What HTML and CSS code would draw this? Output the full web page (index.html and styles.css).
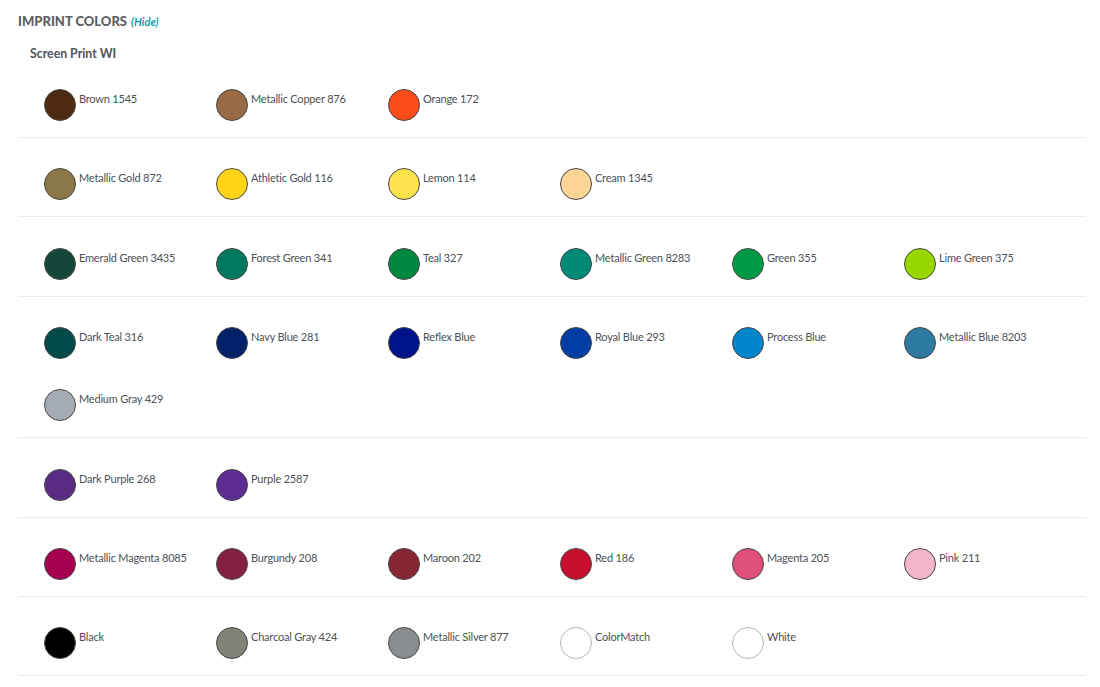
FILE: index.html
```html
<!DOCTYPE html>
<html lang="en">
<head>
<meta charset="utf-8">
<title>Imprint Colors</title>
<link rel="stylesheet" href="styles.css">
</head>
<body>
<section class="imprint">
  <h2 class="title">IMPRINT COLORS <a class="hide" href="#">(Hide)</a></h2>
  <h3 class="method">Screen Print WI</h3>

  <div class="row">
    <div class="swatch"><span class="dot" style="background:#4e2a10"></span><span class="label">Brown 1545</span></div>
    <div class="swatch"><span class="dot" style="background:#9a6a45"></span><span class="label">Metallic Copper 876</span></div>
    <div class="swatch"><span class="dot" style="background:#fc4c1c"></span><span class="label">Orange 172</span></div>
  </div>

  <div class="row">
    <div class="swatch"><span class="dot" style="background:#8c7749"></span><span class="label">Metallic Gold 872</span></div>
    <div class="swatch"><span class="dot" style="background:#ffd416"></span><span class="label">Athletic Gold 116</span></div>
    <div class="swatch"><span class="dot" style="background:#fce34c"></span><span class="label">Lemon 114</span></div>
    <div class="swatch"><span class="dot" style="background:#fdd596"></span><span class="label">Cream 1345</span></div>
  </div>

  <div class="row">
    <div class="swatch"><span class="dot" style="background:#15463a"></span><span class="label">Emerald Green 3435</span></div>
    <div class="swatch"><span class="dot" style="background:#007a5e"></span><span class="label">Forest Green 341</span></div>
    <div class="swatch"><span class="dot" style="background:#00873f"></span><span class="label">Teal 327</span></div>
    <div class="swatch"><span class="dot" style="background:#008a74"></span><span class="label">Metallic Green 8283</span></div>
    <div class="swatch"><span class="dot" style="background:#009a44"></span><span class="label">Green 355</span></div>
    <div class="swatch"><span class="dot" style="background:#97d700"></span><span class="label">Lime Green 375</span></div>
  </div>

  <div class="row">
    <div class="swatch"><span class="dot" style="background:#034b4a"></span><span class="label">Dark Teal 316</span></div>
    <div class="swatch"><span class="dot" style="background:#012169"></span><span class="label">Navy Blue 281</span></div>
    <div class="swatch"><span class="dot" style="background:#001489"></span><span class="label">Reflex Blue</span></div>
    <div class="swatch"><span class="dot" style="background:#003da5"></span><span class="label">Royal Blue 293</span></div>
    <div class="swatch"><span class="dot" style="background:#0085ca"></span><span class="label">Process Blue</span></div>
    <div class="swatch"><span class="dot" style="background:#2e79a0"></span><span class="label">Metallic Blue 8203</span></div>
    <div class="swatch"><span class="dot" style="background:#a5acb3"></span><span class="label">Medium Gray 429</span></div>
  </div>

  <div class="row">
    <div class="swatch"><span class="dot" style="background:#582c83"></span><span class="label">Dark Purple 268</span></div>
    <div class="swatch"><span class="dot" style="background:#5c2d93"></span><span class="label">Purple 2587</span></div>
  </div>

  <div class="row">
    <div class="swatch"><span class="dot" style="background:#a50050"></span><span class="label">Metallic Magenta 8085</span></div>
    <div class="swatch"><span class="dot" style="background:#862041"></span><span class="label">Burgundy 208</span></div>
    <div class="swatch"><span class="dot" style="background:#862633"></span><span class="label">Maroon 202</span></div>
    <div class="swatch"><span class="dot" style="background:#c8102e"></span><span class="label">Red 186</span></div>
    <div class="swatch"><span class="dot" style="background:#e04e7b"></span><span class="label">Magenta 205</span></div>
    <div class="swatch"><span class="dot" style="background:#f5b6cd"></span><span class="label">Pink 211</span></div>
  </div>

  <div class="row">
    <div class="swatch"><span class="dot" style="background:#000000"></span><span class="label">Black</span></div>
    <div class="swatch"><span class="dot" style="background:#828279"></span><span class="label">Charcoal Gray 424</span></div>
    <div class="swatch"><span class="dot" style="background:#8a8d8f"></span><span class="label">Metallic Silver 877</span></div>
    <div class="swatch"><span class="dot dot-light" style="background:#ffffff"></span><span class="label">ColorMatch</span></div>
    <div class="swatch"><span class="dot dot-light" style="background:#ffffff"></span><span class="label">White</span></div>
  </div>
</section>
</body>
</html>
```

FILE: styles.css
```css
html, body {
  margin: 0;
  padding: 0;
  background: #ffffff;
}

body {
  font-family: Lato, "Liberation Sans", sans-serif;
  color: #4b5158;
}

.imprint {
  width: 1068px;
  padding: 12px 0 0 18px;
}

.title {
  margin: 0;
  font-size: 13px;
  line-height: 18px;
  font-weight: 900;
  color: #5a5f66;
}

.hide {
  font-size: 11px;
  font-style: italic;
  font-weight: 700;
  color: #139eaa;
  text-decoration: none;
  margin-left: 1px;
}

.method {
  margin: 16px 0 -2.2px 12px;
  font-size: 12.3px;
  line-height: 14px;
  font-weight: 700;
  color: #4f545a;
}

.row {
  display: flex;
  flex-wrap: wrap;
  padding: 0 0 16px 26px;
  border-bottom: 1px solid #ebebeb;
}

.swatch {
  width: 172px;
  margin-top: 30.3px;
  display: flex;
  align-items: flex-start;
}

.dot {
  flex: none;
  width: 30px;
  height: 30px;
  border-radius: 50%;
  border: 1px solid #4a4a4a;
}

.dot-light {
  border-color: #b5b5b5;
}

.label {
  margin-left: 3px;
  padding-top: 3px;
  font-size: 11px;
  line-height: 14px;
  letter-spacing: -0.2px;
  color: #4b5158;
}
```
